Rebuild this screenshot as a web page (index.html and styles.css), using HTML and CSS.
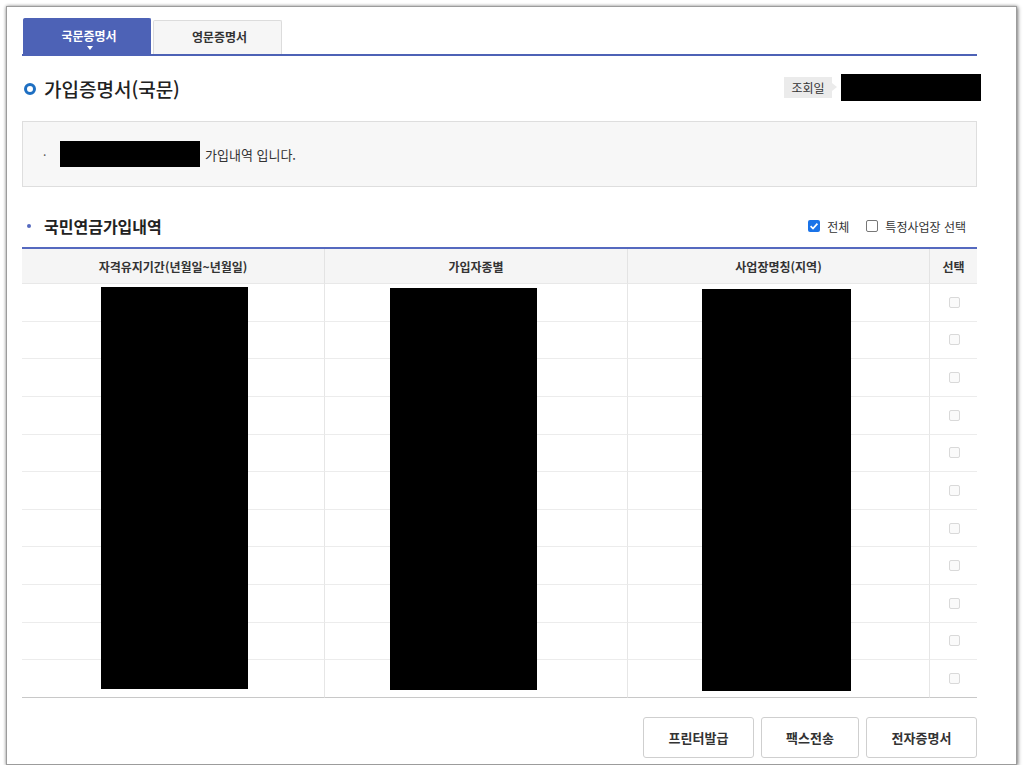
FILE: index.html
```html
<!DOCTYPE html>
<html lang="ko">
<head>
<meta charset="utf-8">
<title>가입증명서(국문)</title>
<link rel="stylesheet" href="styles.css">
</head>
<body>
<div class="window">
  <div class="content">
    <div class="tabs">
      <div class="tab active">국문증명서</div>
      <div class="tab">영문증명서</div>
    </div>

    <div class="title-row">
      <h1 class="page-title"><span class="ring"></span>가입증명서(국문)</h1>
      <div class="query-date">
        <span class="qd-label">조회일</span>
        <span class="redact qd-value"></span>
      </div>
    </div>

    <div class="info-box">
      <span class="dot">·</span>
      <span class="redact info-name"></span>
      <span class="info-text">가입내역 입니다.</span>
    </div>

    <div class="section-head">
      <h2 class="section-title"><span class="bullet"></span>국민연금가입내역</h2>
      <div class="filters">
        <label class="chk"><span class="box checked"><svg viewBox="0 0 12 12" width="12" height="12"><rect x="0" y="0" width="12" height="12" rx="2" fill="#1a73e8"/><path d="M2.6 6.2 L5 8.5 L9.4 3.6" fill="none" stroke="#fff" stroke-width="1.7"/></svg></span>전체</label>
        <label class="chk"><span class="box"></span>특정사업장 선택</label>
      </div>
    </div>

    <div class="grid-wrap">
      <div class="grid">
        <div class="th">자격유지기간(년월일~년월일)</div>
        <div class="th">가입자종별</div>
        <div class="th">사업장명칭(지역)</div>
        <div class="th last">선택</div>

        <div class="td"></div><div class="td"></div><div class="td"></div><div class="td last"><span class="rbox"></span></div>
        <div class="td"></div><div class="td"></div><div class="td"></div><div class="td last"><span class="rbox"></span></div>
        <div class="td"></div><div class="td"></div><div class="td"></div><div class="td last"><span class="rbox"></span></div>
        <div class="td"></div><div class="td"></div><div class="td"></div><div class="td last"><span class="rbox"></span></div>
        <div class="td"></div><div class="td"></div><div class="td"></div><div class="td last"><span class="rbox"></span></div>
        <div class="td"></div><div class="td"></div><div class="td"></div><div class="td last"><span class="rbox"></span></div>
        <div class="td"></div><div class="td"></div><div class="td"></div><div class="td last"><span class="rbox"></span></div>
        <div class="td"></div><div class="td"></div><div class="td"></div><div class="td last"><span class="rbox"></span></div>
        <div class="td"></div><div class="td"></div><div class="td"></div><div class="td last"><span class="rbox"></span></div>
        <div class="td"></div><div class="td"></div><div class="td"></div><div class="td last"><span class="rbox"></span></div>
        <div class="td bottom"></div><div class="td bottom"></div><div class="td bottom"></div><div class="td last bottom"><span class="rbox"></span></div>
      </div>
      <div class="redact cover c1"></div>
      <div class="redact cover c2"></div>
      <div class="redact cover c3"></div>
    </div>

    <div class="actions">
      <button class="btn w1">프린터발급</button>
      <button class="btn w2">팩스전송</button>
      <button class="btn w1">전자증명서</button>
    </div>
  </div>
</div>
</body>
</html>
```
FILE: styles.css
```css
* { box-sizing: border-box; }
html, body { margin: 0; padding: 0; background: #fff; }
body {
  font-family: "Noto Sans CJK KR", "Noto Sans", sans-serif;
  color: #333;
  font-size: 13px;
}
.window {
  margin: 6px 0 0 6px;
  width: 1011px;
  height: 759px;
  border: 1px solid #9c9c9c;
  box-shadow: 1px 1px 4px rgba(0,0,0,0.45), 0 0 3px rgba(0,0,0,0.25);
  background: #fff;
}
.content {
  width: 955px;
  margin-left: 15px;
  padding-top: 11px;
}
.tabs {
  display: flex;
  align-items: flex-end;
  gap: 2px;
  height: 38px;
  border-bottom: 2px solid #4d62b6;
  padding-left: 1px;
}
.tab {
  width: 129px;
  height: 34px;
  border: 1px solid #dcdcdc;
  border-bottom: none;
  background: #f6f6f6;
  color: #333;
  font-size: 12px;
  font-weight: 700;
  line-height: 32px;
  text-align: center;
  border-radius: 2px 2px 0 0;
  padding-left: 4px;
}
.tab.active {
  width: 128px;
  height: 36px;
  background: #4d62b6;
  border-color: #4d62b6;
  color: #fff;
  line-height: 34px;
  position: relative;
}
.tab.active::after {
  content: "";
  position: absolute;
  left: 63px;
  top: 27px;
  border-left: 3px solid transparent;
  border-right: 3px solid transparent;
  border-top: 4px solid #fff;
}
.title-row {
  display: flex;
  justify-content: space-between;
  align-items: center;
  height: 65px;
}
.page-title {
  margin: 0;
  display: flex;
  align-items: center;
  font-size: 19px;
  font-weight: 500;
  color: #222;
  padding-left: 2px;
}
.ring {
  width: 12px;
  height: 12px;
  border: 3px solid #1e6fc2;
  border-radius: 50%;
  margin-right: 8px;
}
.query-date {
  display: flex;
  align-items: center;
  margin-right: -4px;
  margin-top: -3px;
}
.qd-label {
  position: relative;
  background: #ebebeb;
  height: 21px;
  width: 48px;
  font-size: 12px;
  line-height: 21px;
  text-align: center;
  color: #333;
  margin-right: 9px;
}
.qd-label::after {
  content: "";
  position: absolute;
  right: -5px;
  top: 6px;
  border-top: 4px solid transparent;
  border-bottom: 4px solid transparent;
  border-left: 5px solid #ebebeb;
}
.redact { background: #000; display: inline-block; }
.qd-value { width: 140px; height: 27px; }
.info-box {
  height: 66px;
  border: 1px solid #dedede;
  background: #f7f7f7;
  display: flex;
  align-items: center;
  padding-left: 20px;
}
.dot { font-size: 12px; color: #555; width: 17px; }
.info-name { width: 140px; height: 26px; margin-right: 5px; }
.info-text { font-size: 13px; color: #333; }
.section-head {
  display: flex;
  justify-content: space-between;
  align-items: center;
  height: 62px;
  padding-top: 18px;
  border-bottom: 2px solid #5569bf;
}
.section-title {
  margin: 0;
  font-size: 16px;
  font-weight: 700;
  color: #222;
  display: flex;
  align-items: center;
  padding-left: 5px;
}
.bullet {
  width: 4px;
  height: 4px;
  border-radius: 50%;
  background: #5569bf;
  margin-right: 13px;
}
.filters {
  display: flex;
  align-items: center;
  gap: 17px;
  font-size: 12px;
  color: #333;
  margin-right: 11px;
}
.chk { display: flex; align-items: center; }
.box {
  width: 12px;
  height: 12px;
  border: 1px solid #777;
  border-radius: 2px;
  margin-right: 7px;
  background: #fff;
}
.box.checked { border: none; display: flex; }
.grid-wrap { position: relative; }
.grid {
  display: grid;
  grid-template-columns: 303px 303px 302px 47px;
  grid-template-rows: 35px repeat(11, 37.64px);
}
.th {
  background: #f5f5f5;
  border-right: 1px solid #e3e3e3;
  border-bottom: 1px solid #e8e8e8;
  font-size: 12px;
  font-weight: 700;
  color: #333;
  display: flex;
  align-items: center;
  justify-content: center;
}
.td {
  border-right: 1px solid #e6e6e6;
  border-bottom: 1px solid #ececec;
  display: flex;
  align-items: center;
  justify-content: center;
}
.last { border-right: none; }
.td.bottom { border-bottom: 1px solid #c8c8c8; }
.rbox {
  width: 11px;
  height: 11px;
  border: 1px solid #d9d9d9;
  border-radius: 2px;
  background: #fafafa;
  margin-left: 1px;
}
.cover { position: absolute; }
.c1 { left: 79px; top: 38px; width: 147px; height: 402px; }
.c2 { left: 368px; top: 39px; width: 147px; height: 402px; }
.c3 { left: 680px; top: 40px; width: 149px; height: 402px; }
.actions {
  display: flex;
  justify-content: flex-end;
  gap: 7px;
  margin-top: 19px;
}
.btn {
  height: 41px;
  border: 1px solid #cfcfcf;
  border-radius: 3px;
  background: #fff;
  font-family: inherit;
  font-size: 13px;
  font-weight: 700;
  color: #333;
  padding: 0;
}
.w1 { width: 111px; }
.w2 { width: 98px; }
```
